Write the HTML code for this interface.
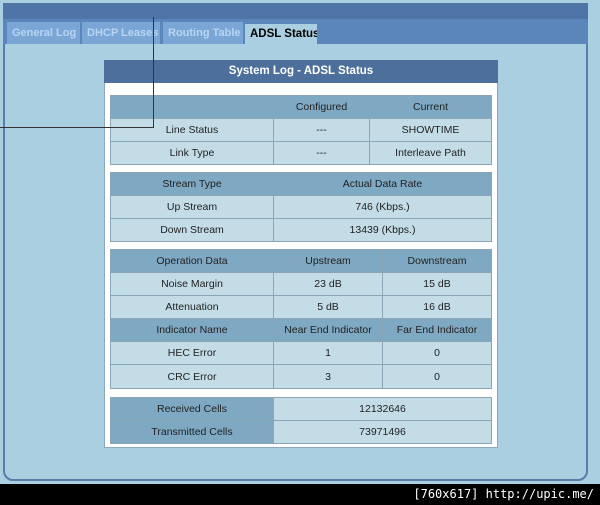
<!DOCTYPE html>
<html><head><meta charset="utf-8"><style>
*{margin:0;padding:0;box-sizing:border-box}
body{width:600px;height:505px;background:#a9cfe0;position:relative;overflow:hidden;font-family:"Liberation Sans",Arial,sans-serif}
.frame{position:absolute;left:3px;top:3px;width:585px;height:478px;border:2px solid #5a7ca8;border-radius:0 0 10px 10px;background:#a9cfe0}
.topbar{position:absolute;left:3px;top:3px;width:585px;height:16px;background:#4f75a6}
.tabrow{position:absolute;left:3px;top:19px;width:585px;height:25px;background:#5b86bb}
.tab{position:absolute;top:22px;height:22px;background:#7aa6d6;color:#b9d5ef;font-weight:bold;font-size:11px;line-height:22px;padding-left:5px;white-space:nowrap;overflow:hidden}
.tab.act{background:#a9cfe0;color:#000;top:24px;height:21px;font-size:11.5px;line-height:21px}
.box{position:absolute;left:104px;top:60px;width:394px;height:388px;background:#fff;border:1px solid #8aa8c0}
.boxh{position:absolute;left:104px;top:60px;width:394px;height:23px;background:#4d6f9c;color:#fff;font-weight:bold;font-size:11.5px;text-align:center;line-height:23px}
table{position:absolute;left:110px;width:382px;border-collapse:collapse;font-size:10.5px;color:#222}
td{border:1px solid #8aa5b5;text-align:center;height:23px;padding:0}
td{background:#c3dce6}
td.h{background:#7fa8c2}
.line{position:absolute;background:#333}
.bottom{position:absolute;left:0;top:484px;width:600px;height:21px;background:#000;color:#fff;font-family:"DejaVu Sans Mono",monospace;font-size:12px;text-align:right;padding-right:6px;line-height:21px}
</style></head><body>
<div class="frame"></div>
<div class="topbar"></div>
<div class="tabrow"></div>
<div class="tab" style="left:7px;width:73px">General Log</div>
<div class="tab" style="left:82px;width:78px">DHCP Leases</div>
<div class="tab" style="left:163px;width:80px">Routing Table</div>
<div class="tab act" style="left:245px;width:72px">ADSL Status</div>
<div class="box"></div>
<div class="boxh">System Log - ADSL Status</div>
<table style="top:95px">
<tr><td class="h" style="width:163px;height:22px"></td><td class="h" style="width:96px">Configured</td><td class="h">Current</td></tr>
<tr><td>Line Status</td><td>---</td><td>SHOWTIME</td></tr>
<tr><td>Link Type</td><td>---</td><td>Interleave Path</td></tr>
</table>
<table style="top:172px">
<tr><td class="h" style="width:163px;height:22px">Stream Type</td><td class="h">Actual Data Rate</td></tr>
<tr><td>Up Stream</td><td>746 (Kbps.)</td></tr>
<tr><td>Down Stream</td><td>13439 (Kbps.)</td></tr>
</table>
<table style="top:249px">
<tr><td class="h" style="width:163px;height:22px">Operation Data</td><td class="h" style="width:109px">Upstream</td><td class="h">Downstream</td></tr>
<tr><td>Noise Margin</td><td>23 dB</td><td>15 dB</td></tr>
<tr><td>Attenuation</td><td>5 dB</td><td>16 dB</td></tr>
<tr><td class="h">Indicator Name</td><td class="h">Near End Indicator</td><td class="h">Far End Indicator</td></tr>
<tr><td>HEC Error</td><td>1</td><td>0</td></tr>
<tr><td style="height:24px">CRC Error</td><td>3</td><td>0</td></tr>
</table>
<table style="top:397px">
<tr><td class="h" style="width:163px">Received Cells</td><td>12132646</td></tr>
<tr><td class="h">Transmitted Cells</td><td>73971496</td></tr>
</table>
<div class="line" style="left:0;top:127px;width:154px;height:1px"></div>
<div class="line" style="left:153px;top:17px;width:1px;height:111px"></div>
<div class="bottom">[760x617] http://upic.me/</div>
</body></html>
